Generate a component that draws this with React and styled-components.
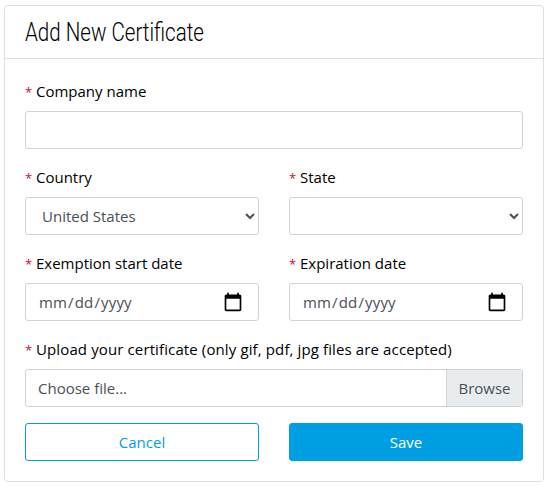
import React from "react";
import styled, { createGlobalStyle } from "styled-components";

const GlobalStyle = createGlobalStyle`
  *, *::before, *::after { box-sizing: border-box; }
  body {
    margin: 0;
    background: #fff;
    color: #000;
    font: 370 15px/24px "Open Sans", "Noto Sans", sans-serif;
  }
`;

const Card = styled.main`
  width: 540px;
  height: 477px;
  margin: 5px 0 0 4px;
  border: 1px solid #dfdfdf;
  border-radius: 4px;
`;

const CardHeader = styled.header`
  height: 53px;
  padding: 0 20px;
  border-bottom: 1px solid #dfdfdf;
`;

const Title = styled.h1`
  margin: 0;
  display: inline-block;
  font: 300 25px/54px Roboto, sans-serif;
  white-space: nowrap;
  transform: scaleX(0.822);
  transform-origin: left;
`;

const Form = styled.form`
  display: grid;
  grid-template-columns: 1fr 1fr;
  gap: 16px 30px;
  padding: 20px;
`;

const Field = styled.div`
  display: flex;
  flex-direction: column;
  gap: 8px;
  min-width: 0;
  grid-column: ${(p) => (p.$wide ? "1 / -1" : "auto")};
`;

const Label = styled.label`
  height: 24px;
  white-space: nowrap;
  letter-spacing: ${(p) => p.$tracking || 0}px;
`;

const Required = styled.span`
  display: inline-block;
  width: 11px;
  font-size: 13px;
  letter-spacing: 0;
  color: #c8102e;
`;

const controlStyles = `
  width: 100%;
  height: 38px;
  border: 1px solid #ced4da;
  border-radius: 3px;
  background: #fff;
  color: #495057;
  font: inherit;
  outline: none;
`;

const Input = styled.input`
  ${controlStyles}
  padding: 6px 12px;
`;

const DateInput = styled(Input).attrs({ type: "date" })`
  padding-right: 15px;
  letter-spacing: 0.15px;

  &::-webkit-calendar-picker-indicator {
    width: 20px;
    height: 20px;
    padding: 0;
    background-size: 20px 20px;
  }
`;

const Select = styled.select`
  ${controlStyles}
  padding: 6px 12px;
`;

const FilePicker = styled.div`
  ${controlStyles}
  display: flex;
  overflow: hidden;
`;

const FileName = styled.span`
  flex: 1;
  padding: 6px 12px;
`;

const Browse = styled.span`
  width: 76px;
  padding: 6px 0;
  text-align: center;
  border-left: 1px solid #ced4da;
  background: #e9ecef;
`;

const Button = styled.button`
  height: 38px;
  padding: 0;
  border: 1px solid #009fe3;
  border-radius: 3px;
  background: ${(p) => (p.$primary ? "#009fe3" : "#fff")};
  color: ${(p) => (p.$primary ? "#fff" : "#009fe3")};
  font: inherit;
`;

function FormField({ id, label, wide, tracking, children }) {
  return (
    <Field $wide={wide}>
      <Label htmlFor={id} $tracking={tracking}>
        <Required>*</Required>
        {label}
      </Label>
      {children}
    </Field>
  );
}

export default function App() {
  return (
    <>
      <GlobalStyle />
      <Card>
        <CardHeader>
          <Title>Add New Certificate</Title>
        </CardHeader>
        <Form>
          <FormField id="company" label="Company name" wide>
            <Input id="company" type="text" />
          </FormField>
          <FormField id="country" label="Country">
            <Select id="country">
              <option>United States</option>
            </Select>
          </FormField>
          <FormField id="state" label="State">
            <Select id="state">
              <option></option>
            </Select>
          </FormField>
          <FormField id="start" label="Exemption start date">
            <DateInput id="start" />
          </FormField>
          <FormField id="end" label="Expiration date">
            <DateInput id="end" />
          </FormField>
          <FormField
            label="Upload your certificate (only gif, pdf, jpg files are accepted)"
            tracking={0.12}
            wide
          >
            <FilePicker>
              <FileName>Choose file...</FileName>
              <Browse>Browse</Browse>
            </FilePicker>
          </FormField>
          <Button type="button">Cancel</Button>
          <Button type="button" $primary>Save</Button>
        </Form>
      </Card>
    </>
  );
}
